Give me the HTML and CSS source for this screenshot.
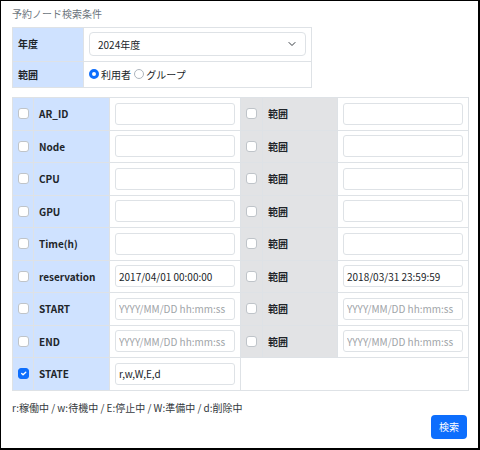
FILE: index.html
```html
<!DOCTYPE html>
<html lang="ja">
<head>
    <meta charset="UTF-8">
    <title>予約ノード検索</title>
    <link rel="stylesheet" href="styles.css">
</head>
<body>
    <div class="frame">
        <div class="caption">予約ノード検索条件</div>
        <table class="cond">
            <colgroup><col class="c-head"><col></colgroup>
            <tr class="row-year">
                <th>年度</th>
                <td>
                    <select class="year">
                        <option selected>2024年度</option>
                        <option>2023年度</option>
                    </select>
                </td>
            </tr>
            <tr class="row-scope">
                <th>範囲</th>
                <td>
                    <label class="radio"><input type="radio" name="scope" checked> 利用者</label>
                    <label class="radio"><input type="radio" name="scope"> グループ</label>
                </td>
            </tr>
        </table>

        <table class="search">
            <colgroup>
                <col class="c-chk"><col class="c-lbl"><col class="c-inp">
                <col class="c-chk2"><col class="c-lbl2"><col class="c-inp">
            </colgroup>
            <tr>
                <td class="chk"><input type="checkbox"></td><th>AR_ID</th><td class="inp"><input type="text"></td>
                <td class="chk alt"><input type="checkbox"></td><th class="alt">範囲</th><td class="inp"><input type="text"></td>
            </tr>
            <tr>
                <td class="chk"><input type="checkbox"></td><th>Node</th><td class="inp"><input type="text"></td>
                <td class="chk alt"><input type="checkbox"></td><th class="alt">範囲</th><td class="inp"><input type="text"></td>
            </tr>
            <tr>
                <td class="chk"><input type="checkbox"></td><th>CPU</th><td class="inp"><input type="text"></td>
                <td class="chk alt"><input type="checkbox"></td><th class="alt">範囲</th><td class="inp"><input type="text"></td>
            </tr>
            <tr>
                <td class="chk"><input type="checkbox"></td><th>GPU</th><td class="inp"><input type="text"></td>
                <td class="chk alt"><input type="checkbox"></td><th class="alt">範囲</th><td class="inp"><input type="text"></td>
            </tr>
            <tr>
                <td class="chk"><input type="checkbox"></td><th>Time(h)</th><td class="inp"><input type="text"></td>
                <td class="chk alt"><input type="checkbox"></td><th class="alt">範囲</th><td class="inp"><input type="text"></td>
            </tr>
            <tr>
                <td class="chk"><input type="checkbox"></td><th>reservation</th><td class="inp"><input type="text" value="2017/04/01 00:00:00"></td>
                <td class="chk alt"><input type="checkbox"></td><th class="alt">範囲</th><td class="inp"><input type="text" value="2018/03/31 23:59:59"></td>
            </tr>
            <tr>
                <td class="chk"><input type="checkbox"></td><th>START</th><td class="inp"><input type="text" placeholder="YYYY/MM/DD hh:mm:ss"></td>
                <td class="chk alt"><input type="checkbox"></td><th class="alt">範囲</th><td class="inp"><input type="text" placeholder="YYYY/MM/DD hh:mm:ss"></td>
            </tr>
            <tr>
                <td class="chk"><input type="checkbox"></td><th>END</th><td class="inp"><input type="text" placeholder="YYYY/MM/DD hh:mm:ss"></td>
                <td class="chk alt"><input type="checkbox"></td><th class="alt">範囲</th><td class="inp"><input type="text" placeholder="YYYY/MM/DD hh:mm:ss"></td>
            </tr>
            <tr>
                <td class="chk"><input type="checkbox" checked></td><th>STATE</th><td class="inp"><input type="text" value="r,w,W,E,d"></td>
                <td colspan="3"></td>
            </tr>
        </table>

        <p class="note">r:稼働中 / w:待機中 / E:停止中 / W:準備中 / d:削除中</p>
        <div class="actions">
            <button type="button" class="btn">検索</button>
        </div>
    </div>
</body>
</html>
```

FILE: styles.css
```css
html, body {
    margin: 0;
    height: 100%;
}

body {
    font-family: "Noto Sans CJK JP", "Noto Sans", sans-serif;
    font-size: 10px;
    color: #212529;
    background: #fff;
}

.frame {
    box-sizing: border-box;
    width: 480px;
    height: 450px;
    border: 1px solid #000;
    border-right-width: 2px;
    border-bottom-width: 2px;
    padding: 6px 10px 0 11px;
}

.caption {
    color: #6c757d;
    line-height: 14px;
    margin-bottom: 6px;
}

table {
    border-collapse: collapse;
    table-layout: fixed;
}

th, td {
    border: 1px solid #dee2e6;
    padding: 0;
    text-align: left;
}

th {
    background: #cfe2ff;
    font-weight: bold;
    padding-left: 5px;
}

/* top condition table */
.cond {
    width: 300px;
}
.cond .c-head {
    width: 71px;
}
.row-year th,
.row-year td {
    height: 34px;
    vertical-align: top;
    box-sizing: border-box;
}
.row-year th {
    padding-top: 8px;
}
.row-year td {
    padding: 4px 0 0 5px;
}
.row-scope th,
.row-scope td {
    height: 25px;
}
.row-scope td {
    padding-left: 5px;
}

.year {
    appearance: none;
    display: block;
    box-sizing: border-box;
    width: 217px;
    height: 24px;
    padding: 0 8px;
    font: inherit;
    color: #212529;
    background: #fff url("data:image/svg+xml,%3csvg xmlns='http://www.w3.org/2000/svg' viewBox='0 0 16 16'%3e%3cpath fill='none' stroke='%23343a40' stroke-linecap='round' stroke-linejoin='round' stroke-width='2' d='m2 5 6 6 6-6'/%3e%3c/svg%3e") no-repeat right 8px center / 10px 8px;
    border: 1px solid #dee2e6;
    border-radius: 4px;
}

.radio {
    display: inline-flex;
    align-items: center;
    gap: 2px;
    margin-right: 1px;
}

input[type="radio"] {
    appearance: none;
    width: 10px;
    height: 10px;
    margin: 0;
    border: 1px solid #adb5bd;
    border-radius: 50%;
    background: #fff;
}
input[type="radio"]:checked {
    border: 3px solid #0d6efd;
}

/* search grid */
.search {
    width: 456px;
    margin-top: 9px;
}
.search .c-chk { width: 21px; }
.search .c-lbl { width: 76px; }
.search .c-inp { width: 131px; }
.search .c-chk2 { width: 22px; }
.search .c-lbl2 { width: 75px; }

.search td,
.search th {
    height: 31.5px;
}

.search .chk {
    background: #cfe2ff;
    text-align: center;
}
.search .alt {
    background: #e2e3e5;
}

.search .inp {
    padding-left: 5px;
}

input[type="checkbox"] {
    appearance: none;
    display: block;
    width: 11px;
    height: 11px;
    margin: 0 auto;
    border: 1px solid #bfc4c9;
    border-radius: 3px;
    background: #fff;
}
input[type="checkbox"]:checked {
    border-color: #0d6efd;
    background: #0d6efd url("data:image/svg+xml,%3csvg xmlns='http://www.w3.org/2000/svg' viewBox='0 0 20 20'%3e%3cpath fill='none' stroke='%23fff' stroke-linecap='round' stroke-linejoin='round' stroke-width='3' d='m6 10 3 3 6-6'/%3e%3c/svg%3e") no-repeat center / 100%;
}

input[type="text"] {
    box-sizing: border-box;
    width: 120px;
    height: 22px;
    padding: 0 3px;
    font: inherit;
    color: #212529;
    border: 1px solid #dee2e6;
    border-radius: 3px;
}
input[type="text"]::placeholder {
    color: #a0a4a8;
}

.note {
    margin: 10px 0 0;
    line-height: 14px;
    color: #343a40;
}

.actions {
    display: flex;
    justify-content: flex-end;
    padding-right: 1px;
}

.btn {
    width: 36px;
    height: 24px;
    padding: 0;
    font: inherit;
    color: #fff;
    background-color: #0d6efd;
    border: none;
    border-radius: 4px;
    cursor: pointer;
}
```
